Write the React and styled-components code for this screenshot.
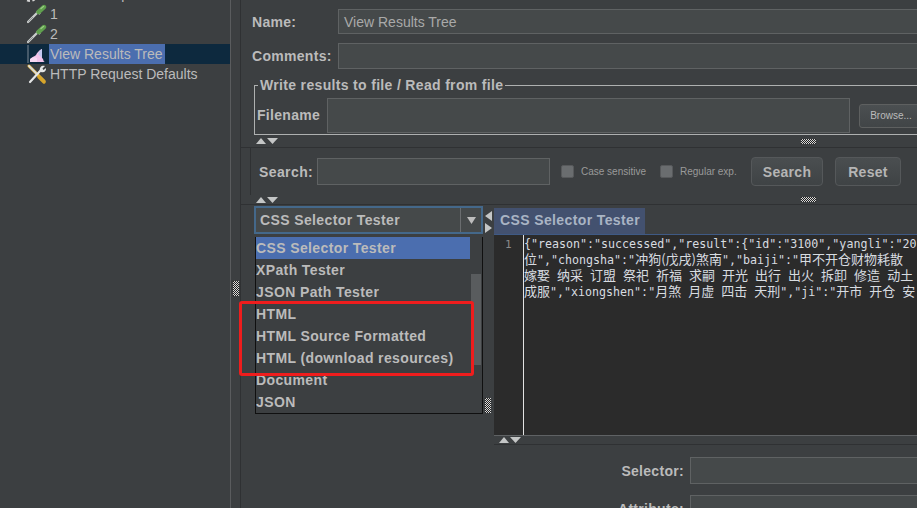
import React from "react";
import styled, { createGlobalStyle } from "styled-components";

const Global = createGlobalStyle`
  html, body { margin: 0; padding: 0; background: #3c3f41; }
  * { box-sizing: border-box; }
`;

const Window = styled.div`
  position: relative; width: 917px; height: 508px; overflow: hidden; display: flex;
  background: #3c3f41; color: #bbbbbb; font-family: "Liberation Sans", Arial, sans-serif;
`;
const Sidebar = styled.aside`
  width: 231px; height: 100%; flex: none; border-right: 1px solid #5a5c5e; overflow: hidden;
`;
const Tree = styled.ul`list-style: none; margin: -16px 0 0; padding: 0;`;
const Row = styled.li`
  height: 20px; display: flex; align-items: center; gap: ${p => p.$gap ?? 3}px;
  padding-left: ${p => p.$indent ?? 27}px; font-size: 14px; white-space: nowrap;
  background: ${p => (p.$selected ? "#0d293e" : "transparent")};
`;
const NodeIcon = styled.svg`width: 20px; height: 20px; flex: none;`;
const GearIcon = styled.svg`width: 16px; height: 16px; flex: none;`;
const NodeText = styled.span`
  padding: 0 2px 0 1px; line-height: 20px; margin-left: -1px;
  background: ${p => (p.$selected ? "#4b6eaf" : "transparent")};
`;
const SideDivider = styled.div`
  width: 10px; flex: none; padding: 281px 0 0 2px; border-right: 1px solid #2f3133;
`;
const VGrip = styled.div`
  width: 6px; height: 15px;
  background: repeating-conic-gradient(#d8d8d8 0 25%, #1e1e1e 0 50%) 0 0 / 2px 2px;
`;
const HGrip = styled(VGrip)`
  width: 15px; height: 5px; margin-left: ${p => p.$at}px;
`;
const Main = styled.main`
  flex: 1; min-width: 0; display: flex; flex-direction: column; overflow: hidden;
`;
const FieldRow = styled.div`
  display: flex; align-items: stretch; height: ${p => p.$h}px; margin-top: 9px; padding-left: 11px;
`;
const Label = styled.label`
  font-size: 14px; font-weight: 700; letter-spacing: 0.3px; color: #bbbbbb;
  display: flex; align-items: center; flex: none; width: ${p => p.$w}px;
`;
const Field = styled.div`
  flex: ${p => (p.$w ? "none" : 1)}; width: ${p => (p.$w ? `${p.$w}px` : "auto")};
  height: ${p => (p.$h ? `${p.$h}px` : "auto")};
  background: #45494a; border: 1px solid #5f6263; border-right: ${p => (p.$w ? "1px solid #5f6263" : "none")};
  padding-left: 5px; display: flex; align-items: center; font-size: 14px; color: #a9a9a9;
`;
const FileSet = styled.fieldset`
  margin: 0 0 0 13px; padding: 5px 0 1px 2px; border: 1px solid #aeb0b0; border-right: none;
  margin-top: 8px; min-width: 0;
`;
const Legend = styled.legend`
  font-size: 14px; font-weight: 700; letter-spacing: 0.33px; line-height: 16px;
  padding: 0 2px; margin-left: 1px; color: #bbbbbb;
`;
const FileRow = styled.div`display: flex; align-items: center; height: 35px;`;
const FileLabel = styled(Label)`width: 70px; padding-bottom: 2px; height: 100%;`;
const FileField = styled(Field)`flex: none; width: 523px; height: 35px; border-right: 1px solid #5f6263;`;
const BrowseButton = styled.button`
  margin-left: 9px; width: 64px; height: 24px; flex: none; font: 10px "Liberation Sans", sans-serif;
  color: #bbbbbb; background: linear-gradient(#4b4f51, #414547); border: 1px solid #5e6060; border-radius: 3px; padding: 0;
`;
const HSplit = styled.div`
  height: ${p => p.$h}px; flex: none; display: flex; align-items: center; padding-left: ${p => p.$left ?? 14}px;
  border-bottom: 1px solid #2f3133; border-top: ${p => (p.$top ? "1px solid #5f6264" : "none")};
`;
const Arrows = styled.svg`width: 24px; height: 8px; flex: none;`;
const SearchPanel = styled.section`
  height: 47px; flex: none; display: flex; align-items: center; padding-left: 8px; margin-left: 9px;
  border-left: 1px solid #2f3133;
`;
const SearchLabel = styled(Label)`width: 58px; letter-spacing: 0.4px;`;
const Check = styled.span`
  width: 13px; height: 13px; flex: none; margin-left: ${p => p.$ml}px; border-radius: 2px;
  background: #6a6d6f; border: 1px solid #57595b;
`;
const CheckText = styled.span`
  font-size: 10px; color: #9a9a9a; margin-left: 7px; width: ${p => p.$w}px; white-space: nowrap;
`;
const ActionButton = styled.button`
  width: ${p => p.$w}px; height: 29px; flex: none; margin-left: ${p => p.$ml}px; padding: 0;
  font: 700 14px "Liberation Sans", sans-serif; letter-spacing: 0.3px; color: #b5b5b5;
  background: linear-gradient(#4a4e50, #3f4345); border: 1px solid #55585a; border-radius: 4px;
`;
const Workspace = styled.div`flex: 1; min-height: 0; display: flex; padding-left: 13px; margin-top: 1px;`;
const LeftPane = styled.div`width: 229px; flex: none; display: flex; flex-direction: column;`;
const Combo = styled.div`
  height: 28px; flex: none; display: flex; align-items: center; border: 2px solid #44688a; background: #45494a;
  font-size: 14px; font-weight: 700; letter-spacing: 0.38px; color: #bbbbbb;
`;
const ComboText = styled.span`flex: 1; padding-left: 4px;`;
const ComboArrow = styled.span`
  width: 21px; height: 100%; border-left: 1px solid #6a6d6f; display: flex; align-items: center; justify-content: center;
`;
const TinyTriangle = styled.svg`width: 9px; height: 7px;`;
const Dropdown = styled.ul`
  position: relative; list-style: none; margin: 3px 0 0 1px; padding: 0; height: 177px;
  border: 1px solid #101010; border-top: none; background: #3c3f41;
`;
const Option = styled.li`
  height: 22px; width: 214px; display: flex; align-items: center;
  font-size: 14px; font-weight: 700; letter-spacing: 0.38px; white-space: nowrap; color: #bbbbbb;
  background: ${p => (p.$active ? "#4b6eaf" : "transparent")};
`;
const ScrollThumb = styled.div`
  position: absolute; left: 215px; top: 37px; width: 10px; height: 91px; background: #595c5e;
`;
const PaneSplit = styled.div`
  width: 11px; flex: none; display: flex; flex-direction: column; padding: 4px 0 0 1px;
`;
const SideArrows = styled.svg`width: 9px; height: 24px; flex: none;`;
const PaneGrip = styled(VGrip)`margin: 164px 0 0 1px;`;
const RightPane = styled.div`flex: 1; min-width: 0; display: flex; flex-direction: column;`;
const TabBar = styled.div`
  height: 29px; flex: none; padding-top: 2px; border-bottom: 1px solid #3f5a85;
`;
const Tab = styled.div`
  width: 151px; height: 26px; background: #43516f; color: #a9b4c4; display: flex; align-items: center;
  padding: 0 0 2px 6px; font-size: 14px; font-weight: 700; letter-spacing: 0.38px; white-space: nowrap;
`;
const Editor = styled.div`
  height: 200px; flex: none; display: flex; background: #2b2b2b; overflow: hidden;
`;
const Gutter = styled.div`
  width: 30px; flex: none; border-right: 1px solid #e2e2e2; padding: 2px 0 0 11px;
  font: 11px/15px "DejaVu Sans Mono", monospace; color: #8a8a8a;
`;
const Code = styled.pre`
  margin: 0; padding: 1px 0 0 0; font: 11.65px/16px "DejaVu Sans Mono", monospace; color: #d8dce0;
  white-space: pre;
`;
const Cjk = styled.span`
  font-family: "Noto Sans CJK SC", sans-serif; font-size: 13px; line-height: 1; word-spacing: 4.1px;
`;
const Form = styled.div`
  padding-top: 12px; display: flex; flex-direction: column; gap: 11px;
`;
const FormRow = styled.div`display: flex; align-items: center; height: 27px;`;
const FormLabel = styled(Label)`width: 196px; justify-content: flex-end; padding-right: 6px;`;
const RedBox = styled.div`
  position: absolute; left: 239px; top: 301px; width: 235px; height: 75px;
  border: 3px solid #ef1d1d; border-radius: 3px;
`;

const ArrowPair = () => (
  <Arrows viewBox="0 0 24 8">
    <path d="M1 7 L6 1 L11 7Z" fill="#c4c6c6" />
    <path d="M12 1 L23 1 L17.5 7Z" fill="#c4c6c6" />
  </Arrows>
);

const Pipette = () => (
  <NodeIcon viewBox="0 0 20 20">
    <path d="M1 18 L11 8" stroke="#c9cccb" strokeWidth="2.4" strokeLinecap="round" />
    <path d="M1.5 17.5 L6 13" stroke="#8f9294" strokeWidth="1" />
    <path d="M10 7 L13 10" stroke="#dfe3df" strokeWidth="2" />
    <path d="M11.5 8 L17 3" stroke="#5f9f4d" strokeWidth="4.4" strokeLinecap="round" />
    <path d="M14 4.5 L16.5 2.5" stroke="#9acb84" strokeWidth="1.4" strokeLinecap="round" />
  </NodeIcon>
);

const Chart = () => (
  <NodeIcon viewBox="0 0 20 20">
    <path d="M1 1 V19" stroke="#7f8a94" strokeWidth="1" />
    <path d="M3 18 C3 13 7 13 9 11 C10 9 12 6 15 5 L15 14 C17 15 16 18 18 18 Z" fill="#f3c4ea" />
    <path d="M11 10 C12 8 13 6 15 5 L15 14 Z" fill="#c4c8f0" />
    <path d="M3 15 C5 13 8 13 10 14 L10 18 L3 18 Z" fill="#f7d8f2" />
  </NodeIcon>
);

const Tools = () => (
  <NodeIcon viewBox="0 0 20 20">
    <path d="M2 2 L17 17" stroke="#e9b93a" strokeWidth="3" strokeLinecap="round" />
    <path d="M2 2 L9 9" stroke="#d9dbdc" strokeWidth="1.8" strokeLinecap="round" />
    <path d="M3 18 L14 6" stroke="#e4e6e6" strokeWidth="2.2" strokeLinecap="round" />
    <path d="M13 7 C12 3 15 1 18 2 L15.5 4.5 L16.5 6 L19 4 C19.5 7 17 9 14 8 Z" fill="#e4e6e6" />
    <path d="M12 13 L17 18" stroke="#d7a52b" strokeWidth="3.4" strokeLinecap="round" />
  </NodeIcon>
);

const Gear = () => (
  <GearIcon viewBox="0 0 16 16">
    <circle cx="8" cy="8" r="5" fill="#d6d6d6" />
    <circle cx="8" cy="8" r="7" fill="none" stroke="#d6d6d6" strokeWidth="2" strokeDasharray="3 2.5" />
  </GearIcon>
);

const options = [
  "CSS Selector Tester", "XPath Tester", "JSON Path Tester", "HTML",
  "HTML Source Formatted", "HTML (download resources)", "Document", "JSON",
];

export default function App() {
  return (
    <Window>
      <Global />
      <Sidebar>
        <Tree>
          <Row $indent={22} $gap={4}><Gear /><NodeText>Thread Group</NodeText></Row>
          <Row><Pipette /><NodeText>1</NodeText></Row>
          <Row><Pipette /><NodeText>2</NodeText></Row>
          <Row $selected><Chart /><NodeText $selected>View Results Tree</NodeText></Row>
          <Row><Tools /><NodeText>HTTP Request Defaults</NodeText></Row>
        </Tree>
      </Sidebar>
      <SideDivider><VGrip /></SideDivider>
      <Main>
        <FieldRow $h={25}>
          <Label $w={86}>Name:</Label>
          <Field>View Results Tree</Field>
        </FieldRow>
        <FieldRow $h={26}>
          <Label $w={86}>Comments:</Label>
          <Field />
        </FieldRow>
        <FileSet>
          <Legend>Write results to file / Read from file</Legend>
          <FileRow>
            <FileLabel>Filename</FileLabel>
            <FileField />
            <BrowseButton>Browse...</BrowseButton>
          </FileRow>
        </FileSet>
        <HSplit $h={13}><ArrowPair /><HGrip $at={522} /></HSplit>
        <SearchPanel>
          <SearchLabel>Search:</SearchLabel>
          <Field $w={233} $h={27} />
          <Check $ml={11} />
          <CheckText $w={72}>Case sensitive</CheckText>
          <Check $ml={7} />
          <CheckText $w={64}>Regular exp.</CheckText>
          <ActionButton $w={72} $ml={7}>Search</ActionButton>
          <ActionButton $w={66} $ml={12}>Reset</ActionButton>
        </SearchPanel>
        <HSplit $h={10}><ArrowPair /><HGrip $at={522} /></HSplit>
        <Workspace>
          <LeftPane>
            <Combo>
              <ComboText>CSS Selector Tester</ComboText>
              <ComboArrow>
                <TinyTriangle viewBox="0 0 9 7"><path d="M0 0 H9 L4.5 7Z" fill="#bdbdbd" /></TinyTriangle>
              </ComboArrow>
            </Combo>
            <Dropdown>
              {options.map((o, i) => <Option key={o} $active={i === 0}>{o}</Option>)}
              <ScrollThumb />
            </Dropdown>
          </LeftPane>
          <PaneSplit>
            <SideArrows viewBox="0 0 9 24">
              <path d="M8 1 V11 L1 6Z" fill="#c4c6c6" />
              <path d="M1 13 V23 L8 18Z" fill="#c4c6c6" />
            </SideArrows>
            <PaneGrip />
          </PaneSplit>
          <RightPane>
            <TabBar><Tab>CSS Selector Tester</Tab></TabBar>
            <Editor>
              <Gutter>1</Gutter>
              <Code>
                {`{"reason":"successed","result":{"id":"3100","yangli":"20\n`}
                <Cjk>位</Cjk>{`","chongsha":"`}<Cjk>冲狗(戊戌)煞南</Cjk>{`","baiji":"`}<Cjk>甲不开仓财物耗散</Cjk>{"\n"}
                <Cjk>嫁娶 纳采 订盟 祭祀 祈福 求嗣 开光 出行 出火 拆卸 修造 动土</Cjk>{"\n"}
                <Cjk>成服</Cjk>{`","xiongshen":"`}<Cjk>月煞 月虚 四击 天刑</Cjk>{`","ji":"`}<Cjk>开市 开仓 安</Cjk>
              </Code>
            </Editor>
            <HSplit $h={10} $left={4} $top><ArrowPair /></HSplit>
            <Form>
              <FormRow><FormLabel>Selector:</FormLabel><Field $h={27} /></FormRow>
              <FormRow><FormLabel>Attribute:</FormLabel><Field $h={27} /></FormRow>
            </Form>
          </RightPane>
        </Workspace>
      </Main>
      <RedBox />
    </Window>
  );
}
